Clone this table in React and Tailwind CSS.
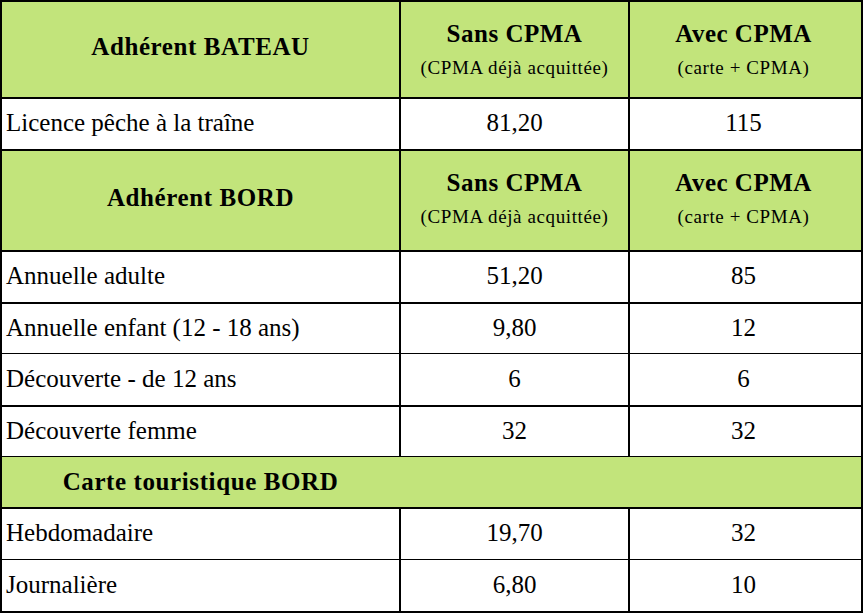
import React from "react";

function Header({ title, cls }) {
  return (
    <div className={`flex border-black bg-[#c2e47b] ${cls}`}>
      <div className="w-[397px] flex items-center justify-center font-bold text-[25px] tracking-[0.6px] text-black pb-[5px]">
        {title}
      </div>
      <div className="w-[229px] border-l-2 border-black flex flex-col items-center pt-[17px]">
        <div className="font-bold text-[25px] leading-[30px] tracking-[0.5px]">Sans CPMA</div>
        <div className="text-[19px] leading-[24px] mt-[7px] tracking-[0.6px]">(CPMA déjà acquittée)</div>
      </div>
      <div className="w-[229px] border-l-2 border-black flex flex-col items-center pt-[17px]">
        <div className="font-bold text-[25px] leading-[30px] tracking-[0.5px]">Avec CPMA</div>
        <div className="text-[19px] leading-[24px] mt-[7px] tracking-[0.6px]">(carte + CPMA)</div>
      </div>
    </div>
  );
}

function Row({ label, a, b, cls }) {
  return (
    <div className={`flex border-black bg-white text-[25px] text-black ${cls}`}>
      <div className="w-[397px] flex items-center pl-[4px] pb-[2px]">{label}</div>
      <div className="w-[229px] border-l-2 border-black flex items-center justify-center pb-[2px]">{a}</div>
      <div className="w-[229px] border-l-2 border-black flex items-center justify-center pb-[2px]">{b}</div>
    </div>
  );
}

export default function App() {
  return (
    <div className="w-[864px] h-[613px] bg-white font-['Liberation_Serif']">
      <div className="w-[863px] border-2 border-black">
        <Header title="Adhérent BATEAU" cls="h-[95px]" />
        <Row label="Licence pêche à la traîne" a="81,20" b="115" cls="h-[52px] border-t-2" />
        <Header title="Adhérent BORD" cls="h-[101px] border-t-2" />
        <Row label="Annuelle adulte" a="51,20" b="85" cls="h-[52px] border-t-2" />
        <Row label="Annuelle enfant (12 - 18 ans)" a="9,80" b="12" cls="h-[51px] border-t-2" />
        <Row label="Découverte - de 12 ans" a="6" b="6" cls="h-[52px] border-t" />
        <Row label="Découverte femme" a="32" b="32" cls="h-[51px] border-t-2" />
        <div className="flex h-[51px] border-t border-black bg-[#c2e47b]">
          <div className="w-[397px] flex items-center justify-center font-bold text-[25px] tracking-[0.6px]">
            Carte touristique BORD
          </div>
        </div>
        <Row label="Hebdomadaire" a="19,70" b="32" cls="h-[52px] border-t-2" />
        <Row label="Journalière" a="6,80" b="10" cls="h-[52px] border-t" />
      </div>
    </div>
  );
}
